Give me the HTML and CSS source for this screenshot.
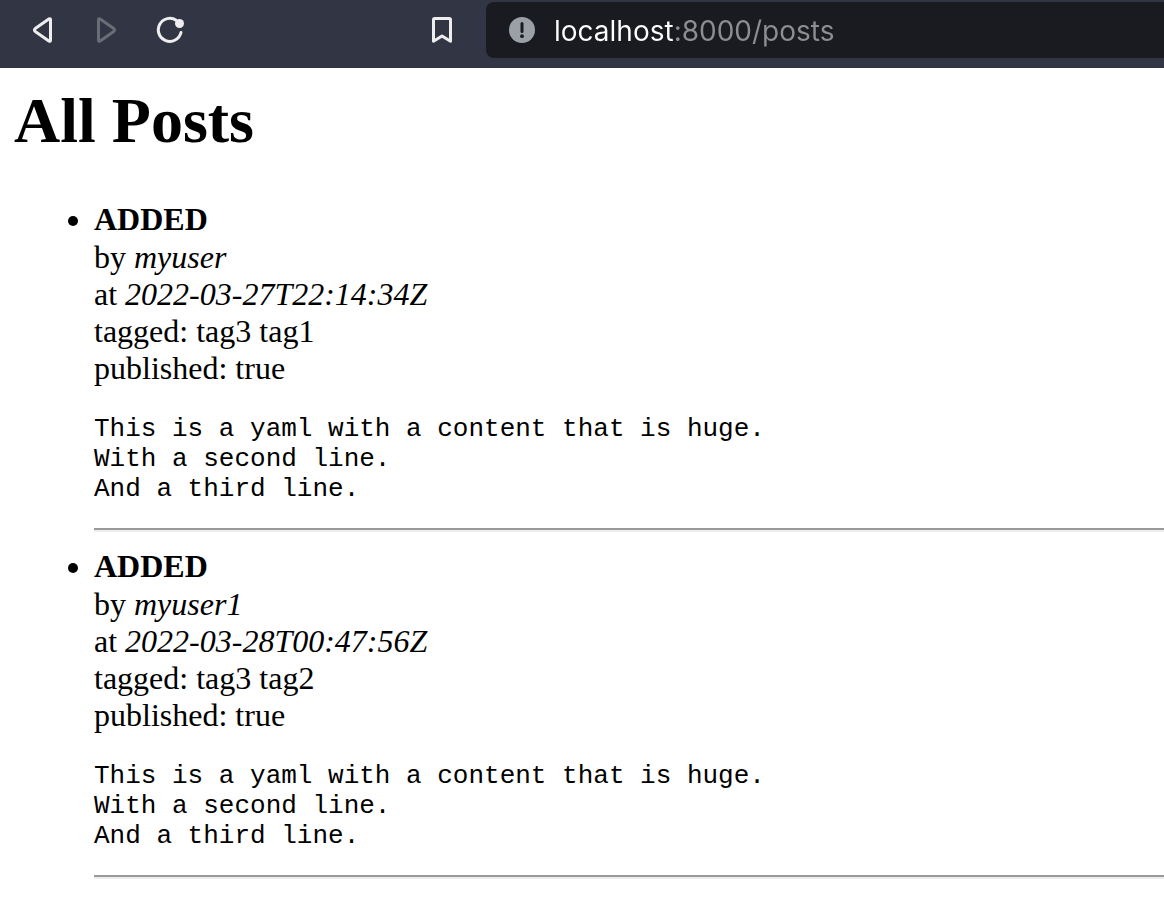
FILE: index.html
```html
<!DOCTYPE html>
<html lang="en">
<head>
<meta charset="utf-8">
<title>All Posts</title>
<link rel="stylesheet" href="styles.css">
</head>
<body>
<header class="toolbar">
  <nav class="nav-buttons" aria-label="Browser navigation">
    <button class="icon-button" type="button" aria-label="Back">
      <svg viewBox="0 0 32 32"><path d="M23.2 4.8 9.6 14.2Q7.2 16 9.6 17.8L23.2 27.2Q24.4 27.7 24.5 26.2V5.8Q24.4 4.3 23.2 4.8Z"/></svg>
    </button>
    <button class="icon-button" type="button" aria-label="Forward" disabled>
      <svg viewBox="0 0 32 32"><path d="M9.8 4.8 23.4 14.2Q25.8 16 23.4 17.8L9.8 27.2Q8.6 27.7 8.5 26.2V5.8Q8.6 4.3 9.8 4.8Z"/></svg>
    </button>
    <button class="icon-button" type="button" aria-label="Reload">
      <svg viewBox="0 0 32 32"><path d="M27 18.5A11.5 11.5 0 1 1 22.5 6.5"/><circle class="solid" cx="25.5" cy="9.5" r="4.5"/></svg>
    </button>
  </nav>
  <button class="icon-button" type="button" aria-label="Bookmark">
    <svg viewBox="0 0 32 32"><path d="M8.8 4.5H23.2Q24.5 4.5 24.5 5.8V27.2L16 22 7.5 27.2V5.8Q7.5 4.5 8.8 4.5Z"/></svg>
  </button>
  <div class="address">
    <svg class="site-info" viewBox="0 0 26 26" aria-hidden="true"><circle class="disc" cx="13" cy="13" r="13"/><path class="mark" d="M13 6.5V14.5"/><circle class="dot" cx="13" cy="19.2" r="1.9"/></svg>
    <input class="url" type="text" aria-label="Address" value="localhost:8000/posts">
  </div>
</header>
<main class="page">
  <h1>All Posts</h1>
  <ul class="posts">
    <li>
      <div class="status"><b>ADDED</b></div>
      <div>by <i>myuser</i></div>
      <div>at <i>2022-03-27T22:14:34Z</i></div>
      <div>tagged: tag3 tag1</div>
      <div>published: true</div>
      <pre>This is a yaml with a content that is huge.
With a second line.
And a third line.</pre>
      <hr>
    </li>
    <li>
      <div class="status"><b>ADDED</b></div>
      <div>by <i>myuser1</i></div>
      <div>at <i>2022-03-28T00:47:56Z</i></div>
      <div>tagged: tag3 tag2</div>
      <div>published: true</div>
      <pre>This is a yaml with a content that is huge.
With a second line.
And a third line.</pre>
      <hr>
    </li>
  </ul>
</main>
</body>
</html>
```
FILE: styles.css
```css
body {
  margin: 0;
  background: #fff;
  color: #000;
  font: 32px/37px "Liberation Serif", "Times New Roman", serif;
}

.toolbar {
  display: flex;
  align-items: center;
  padding: 2px 0 10px 26px;
  background: #323544;
}

.nav-buttons {
  display: flex;
  gap: 32px;
  margin-right: 240px;
}

.icon-button {
  flex: none;
  width: 32px;
  height: 32px;
  padding: 0;
  border: 0;
  background: none;
  color: #eee;
}

.icon-button:disabled {
  color: #6a6c76;
}

.icon-button svg {
  display: block;
  fill: none;
  stroke: currentColor;
  stroke-width: 3;
  stroke-linecap: round;
  stroke-linejoin: round;
}

.icon-button .solid {
  fill: currentColor;
  stroke: none;
}

.address {
  flex: 1;
  display: flex;
  align-items: center;
  gap: 19px;
  min-width: 0;
  height: 56px;
  margin-left: 28px;
  padding-left: 23px;
  border-radius: 8px 0 0 8px;
  background: #1a1b20;
}

.site-info {
  flex: none;
  width: 26px;
  height: 26px;
}

.disc {
  fill: #9aa0a6;
}

.mark {
  stroke: #1a1b20;
  stroke-width: 3;
  stroke-linecap: round;
}

.dot {
  fill: #1a1b20;
}

.url {
  flex: 1;
  min-width: 0;
  padding: 2px 0 0;
  border: 0;
  outline: 0;
  font: 28px/36px Inter, sans-serif;
  color: transparent;
  background: linear-gradient(90deg, #fff 120px, #8d8e90 120px);
  -webkit-background-clip: text;
  background-clip: text;
}

.page {
  padding: 0 0 0 14px;
}

h1 {
  margin: 0 0 43px;
  padding-top: 16px;
  font-size: 64px;
  line-height: 74px;
}

.posts {
  margin: 0;
  padding-left: 80px;
}

.status {
  padding-bottom: 1px;
}

pre {
  margin: 27px 0 24px;
  font: 26px/30px "Liberation Mono", "Courier New", monospace;
}

hr {
  margin: 16px 0;
  border: 0;
  border-top: 2px solid #999;
  border-bottom: 2px solid #eee;
}
```
